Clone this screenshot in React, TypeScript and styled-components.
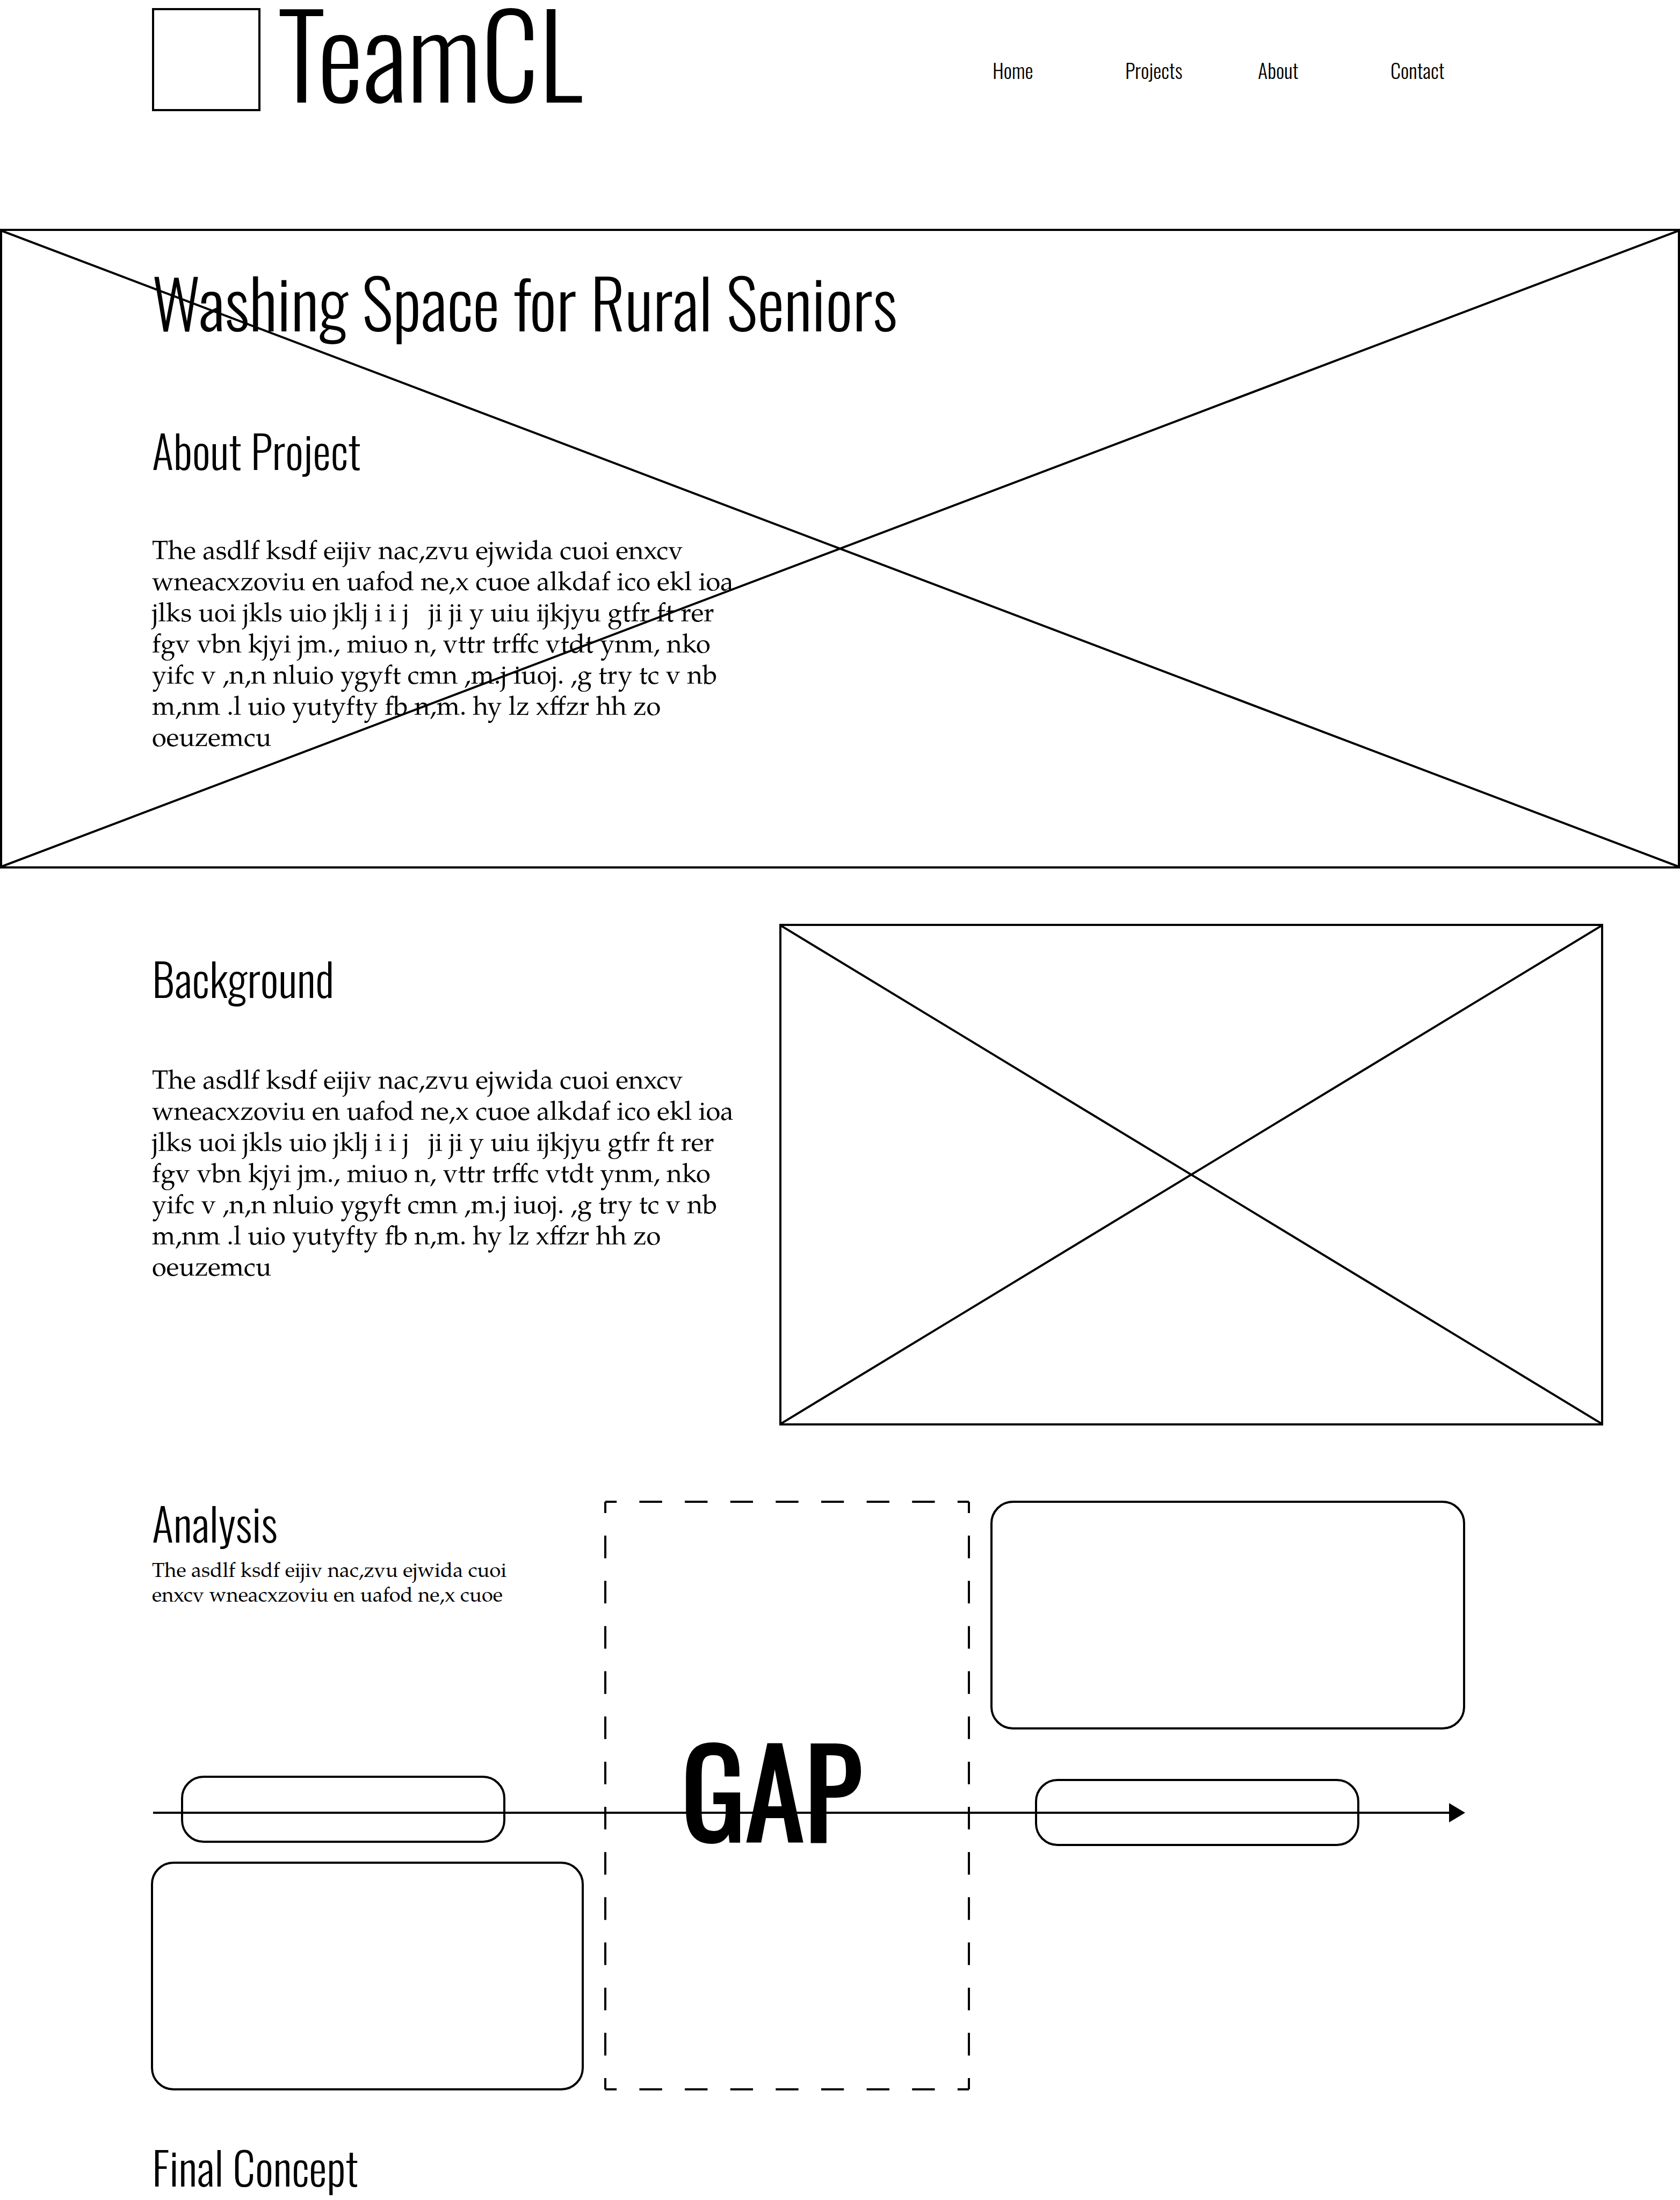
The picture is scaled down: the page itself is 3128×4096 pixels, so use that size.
import React from "react";
import styled, { createGlobalStyle } from "styled-components";

const display =
  'Oswald, "Open Sans Condensed", "Roboto Condensed", "Liberation Sans Narrow", Roboto, sans-serif';
const serif =
  '"Palatino Linotype", Palatino, "TeX Gyre Pagella", "URW Palladio L", "Liberation Serif", serif';

const GlobalStyle = createGlobalStyle`
  *, *::before, *::after { box-sizing: border-box; }
  body { margin: 0; background: #fff; color: #000; }
  h1, h2, p { margin: 0; font-weight: 300; }
`;

const Page = styled.div`
  font-family: ${display};
  font-weight: 300;
`;

const Header = styled.header`
  display: grid;
  grid-template-columns: 1fr 1280px;
  height: 426px;
  padding: 15px 0 0 283px;
`;

const Brand = styled.div`
  display: flex;
  align-items: flex-start;
  gap: 32px;
`;

const LogoBox = styled.div`
  width: 202px;
  height: 192px;
  border: 4px solid #000;
`;

const BrandName = styled.div`
  font-size: 214px;
  line-height: 160px;
`;

const Nav = styled.nav`
  display: grid;
  grid-template-columns: repeat(4, 247px);
  padding-top: 91px;
`;

const NavLink = styled.a`
  color: inherit;
  text-decoration: none;
  font-size: 38px;
  line-height: 48px;
`;

const Hero = styled.section`
  position: relative;
  height: 1191px;
  padding: 54px 283px 0;
`;

const Title = styled.h1`
  font-size: 126px;
  line-height: 160px;
`;

const Heading = styled.h2`
  font-size: 84px;
  line-height: 80px;
`;

const Copy = styled.p<{ $small?: boolean }>`
  font-family: ${serif};
  font-size: ${(p) => (p.$small ? 38 : 49)}px;
  line-height: ${(p) => (p.$small ? 46 : 58)}px;
  font-weight: 400;
  white-space: pre;
`;

const HeroText = styled.div`
  position: relative;
  display: flex;
  flex-direction: column;

  ${Heading} { margin-top: 157px; }
  ${Copy} { margin-top: 124px; }
`;

const Picture = styled.svg<{ $fill?: boolean }>`
  display: block;
  width: 100%;
  height: 934px;
  border: 4px solid #000;
  ${(p) => p.$fill && "position: absolute; inset: 0; height: 100%;"}
`;

const Background = styled.section`
  display: grid;
  grid-template-columns: 1168px 1fr;
  padding: 103px 143px 0 283px;
`;

const BackgroundText = styled.div`
  padding-top: 60px;

  ${Copy} { margin-top: 127px; }
`;

const Analysis = styled.section`
  position: relative;
  display: grid;
  grid-template-columns: 806fr 681fr 884fr;
  gap: 38px;
  margin: 140px 400px 0 281px;
`;

const Column = styled.div`
  display: flex;
  flex-direction: column;
`;

const Intro = styled.div`
  height: 512px;
  padding-left: 2px;

  ${Copy} { margin-top: 31px; }
`;

const Pill = styled.div`
  width: 604px;
  height: 125px;
  border: 4px solid #000;
  border-radius: 42px;
`;

const LeftPill = styled(Pill)`
  margin: 0 0 35px 56px;
`;

const RightPill = styled(Pill)`
  margin: 92px 0 0 83px;
`;

const Card = styled.div`
  height: 426px;
  border: 4px solid #000;
  border-radius: 42px;
`;

const GapBox = styled.div`
  position: relative;
  display: flex;
  justify-content: center;
  padding: 429px 58px 0 0;
`;

const GapLabel = styled.strong`
  position: relative;
  font-size: 223px;
  line-height: 210px;
  font-weight: 400;
  -webkit-text-stroke: 4px #000;
`;

const Dashes = styled.svg`
  position: absolute;
  left: 2px;
  top: 2px;
  width: calc(100% - 4px);
  height: calc(100% - 4px);
  overflow: visible;
`;

const Axis = styled.div`
  position: absolute;
  left: 4px;
  right: 0;
  top: 563px;
  display: flex;
  align-items: center;
`;

const AxisLine = styled.div`
  flex: 1;
  height: 4px;
  background: #000;
`;

const FinalConcept = styled.section`
  height: 205px;
  padding: 101px 283px 0;
`;

const paragraph = `The asdlf ksdf eijiv nac,zvu ejwida cuoi enxcv
wneacxzoviu en uafod ne,x cuoe alkdaf ico ekl ioa
jlks uoi jkls uio jklj i i j   ji ji y uiu ijkjyu gtfr ft rer
fgv vbn kjyi jm., miuo n, vttr trffc vtdt ynm, nko
yifc v ,n,n nluio ygyft cmn ,m.j iuoj. ,g try tc v nb
m,nm .l uio yutyfty fb n,m. hy lz xffzr hh zo
oeuzemcu`;

const summary = `The asdlf ksdf eijiv nac,zvu ejwida cuoi
enxcv wneacxzoviu en uafod ne,x cuoe`;

const links = ["Home", "Projects", "About", "Contact"];

function CrossedPicture({ fill }: { fill?: boolean }) {
  return (
    <Picture $fill={fill} viewBox="0 0 100 100" preserveAspectRatio="none" aria-hidden="true">
      <path
        d="M0 0L100 100M0 100L100 0"
        fill="none"
        stroke="#000"
        strokeWidth="4"
        vectorEffect="non-scaling-stroke"
      />
    </Picture>
  );
}

function DashedFrame() {
  const line = {
    stroke: "#000",
    strokeWidth: 4,
    strokeDasharray: "1 1",
    strokeDashoffset: 0.5,
  };
  return (
    <Dashes aria-hidden="true">
      <line x1="0" y1="0" x2="100%" y2="0" pathLength={16} {...line} />
      <line x1="0" y1="100%" x2="100%" y2="100%" pathLength={16} {...line} />
      <line x1="0" y1="0" x2="0" y2="100%" pathLength={26} {...line} />
      <line x1="100%" y1="0" x2="100%" y2="100%" pathLength={26} {...line} />
    </Dashes>
  );
}

export default function App() {
  return (
    <Page>
      <GlobalStyle />
      <Header>
        <Brand>
          <LogoBox />
          <BrandName>TeamCL</BrandName>
        </Brand>
        <Nav>
          {links.map((label) => (
            <NavLink key={label} href={`#${label.toLowerCase()}`}>
              {label}
            </NavLink>
          ))}
        </Nav>
      </Header>
      <main>
        <Hero>
          <CrossedPicture fill />
          <HeroText>
            <Title>Washing Space for Rural Seniors</Title>
            <Heading>About Project</Heading>
            <Copy>{paragraph}</Copy>
          </HeroText>
        </Hero>
        <Background>
          <BackgroundText>
            <Heading>Background</Heading>
            <Copy>{paragraph}</Copy>
          </BackgroundText>
          <CrossedPicture />
        </Background>
        <Analysis>
          <Column>
            <Intro>
              <Heading>Analysis</Heading>
              <Copy $small>{summary}</Copy>
            </Intro>
            <LeftPill />
            <Card />
          </Column>
          <GapBox>
            <DashedFrame />
            <GapLabel>GAP</GapLabel>
          </GapBox>
          <Column>
            <Card />
            <RightPill />
          </Column>
          <Axis>
            <AxisLine />
            <svg width="30" height="36" viewBox="0 0 30 36" aria-hidden="true">
              <path d="M0 0L30 18L0 36Z" />
            </svg>
          </Axis>
        </Analysis>
        <FinalConcept>
          <Heading>Final Concept</Heading>
        </FinalConcept>
      </main>
    </Page>
  );
}
